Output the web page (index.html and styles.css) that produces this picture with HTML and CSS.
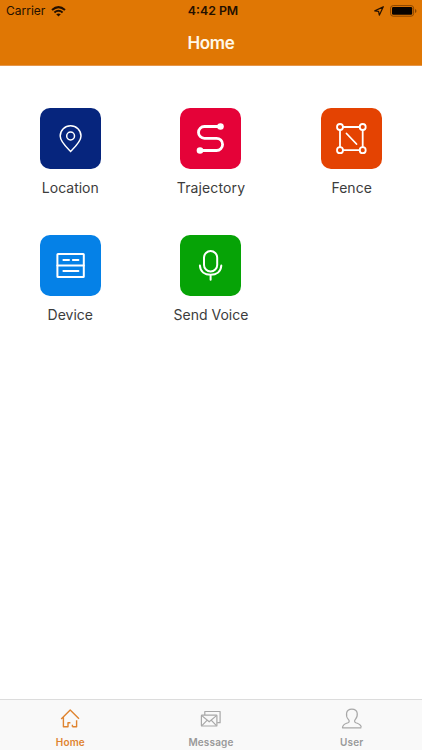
FILE: index.html
```html
<!DOCTYPE html>
<html lang="en">
<head>
<meta charset="utf-8">
<title>Home</title>
<link rel="stylesheet" href="styles.css">
</head>
<body>
<div class="app">
  <header class="header">
    <div class="status">
      <div class="status-left"><span class="carrier">Carrier</span>
        <svg width="15" height="11" viewBox="0 0 15 11" fill="none" stroke="#241000" stroke-width="2"><path d="M1 4Q7.5-1.7 14 4M3.4 6.5Q7.5 3 11.6 6.5"/><path d="M5.2 8.3Q7.5 6.5 9.8 8.3L7.5 10.6Z" fill="#241000" stroke="none"/></svg>
      </div>
      <div class="time">4:42 PM</div>
      <div class="status-right">
        <svg width="10" height="10" viewBox="0 0 10 10" fill="none" stroke="#241000" stroke-width="1.2" stroke-linejoin="round"><path d="M9.3 .7L.8 4.9L4.6 5.4L5.3 9.2Z"/></svg>
        <svg width="27" height="12" viewBox="0 0 27 12"><rect x=".6" y=".6" width="23" height="10.6" rx="2.6" fill="none" stroke="#884500"/><rect x="2" y="2" width="20.2" height="7.8" rx="1.3" fill="#080300"/><path d="M25 4Q26.5 4.6 26.5 6T25 8Z" fill="#884500"/></svg>
      </div>
    </div>
    <h1 class="title">Home</h1>
  </header>
  <main class="grid">
    <div class="item">
      <svg class="tile location" viewBox="0 0 61 61"><path d="M30.6 43.4C27 39.8 20.2 33.6 20.2 28a10.4 10.3 0 0 1 20.8 0C41 33.6 34.2 39.8 30.6 43.4Z"/><circle cx="30.6" cy="28" r="3.9"/></svg>
      <span class="label location-label">Location</span>
    </div>
    <div class="item">
      <svg class="tile trajectory" viewBox="0 0 61 61"><path d="M40.5 18.5H24.4a5.9 5.9 0 0 0 0 11.8H36.5a6.1 6.1 0 0 1 0 12.2H20"/><circle class="dot" cx="40.5" cy="18.5" r="3.3"/><circle class="dot" cx="20" cy="42.5" r="3.3"/></svg>
      <span class="label trajectory-label">Trajectory</span>
    </div>
    <div class="item">
      <svg class="tile fence" viewBox="0 0 61 61"><path d="M22 19H38.7M22 42.2H38.7M19 22V39.2M41.7 22V39.2M25.5 25.5L35.5 36"/><circle cx="19" cy="19" r="3"/><circle cx="41.7" cy="19" r="3"/><circle cx="19" cy="42.2" r="3"/><circle cx="41.7" cy="42.2" r="3"/></svg>
      <span class="label fence-label">Fence</span>
    </div>
    <div class="item">
      <svg class="tile device" viewBox="0 0 61 61"><rect x="17.4" y="18.9" width="26.4" height="23.2" rx=".6"/><path d="M17.4 30.4H43.8M23.4 25H29M32.9 25H38.4M23.4 36H38.4"/></svg>
      <span class="label device-label">Device</span>
    </div>
    <div class="item">
      <svg class="tile voice" viewBox="0 0 61 61"><rect x="24" y="16.1" width="13.2" height="20.4" rx="6.6"/><path d="M19.9 30.6C20.3 36.5 24.7 39.8 30.6 39.8S40.9 36.5 41.3 30.6M30.6 40V44.7"/></svg>
      <span class="label voice-label">Send Voice</span>
    </div>
  </main>
  <nav class="tabs">
    <div class="tab active">
      <svg viewBox="0 0 22 22"><path d="M4.4 9V18.8H9V14.8H11.4M13.4 18.8H17.6V12.2M13.4 18.8V16.8M2.2 11L11.2 2.1L20 10.8"/></svg>
      <span class="home-tab">Home</span>
    </div>
    <div class="tab">
      <svg viewBox="0 0 22 22"><path d="M4.8 7V3.5H20.1V14.7H17.2"/><rect x="1.4" y="7.2" width="15.5" height="10.8" rx=".6"/><path d="M1.8 7.6L9.2 13.8L16.5 7.6M1.9 17.6L7 12.3M16.4 17.6L11.4 12.3"/></svg>
      <span class="message-tab">Message</span>
    </div>
    <div class="tab">
      <svg viewBox="0 0 22 22"><path d="M20.3 19.8H1.5C1.5 16.3 4.3 15.7 7 14.7C8.7 14 8.4 12.5 7.3 11.4C5.6 9.7 5.3 7.4 5.6 5.2C6 2.4 8 1.1 10.9 1.1S15.8 2.4 16.2 5.2C16.5 7.5 16.1 9.7 14.4 11.4C13.3 12.5 13.2 14 14.8 14.7C17.4 15.7 19.9 16.2 20.3 19.3"/></svg>
      <span class="user-tab">User</span>
    </div>
  </nav>
</div>
</body>
</html>
```
FILE: styles.css
```css
* { box-sizing: border-box; }
body { margin: 0; background: #fff; font-family: Inter, sans-serif; }
.app { width: 422px; height: 750px; display: flex; flex-direction: column; }
.header { height: 66px; flex-shrink: 0; background: #e07704; border-bottom: 1px solid #e5964a; }
.status { height: 22px; padding: 0 5px 0 6px; display: grid; grid-template-columns: 1fr auto 1fr; align-items: center; color: #241000; font-size: 12px; line-height: 22px; }
.status-left, .status-right { display: flex; align-items: center; gap: 6px; }
.status-right { justify-content: flex-end; }
.carrier { letter-spacing: 0; }
.time { font-weight: 600; letter-spacing: 0; font-size: 12.3px; padding-left: 3px; }
.title { margin: 0; color: #fff9e9; text-align: center; font-size: 17px; font-weight: 600; line-height: 42px; letter-spacing: -.3px; }
.grid { flex: 1; display: grid; grid-template-columns: repeat(3, 1fr); grid-auto-rows: 126.6px; padding-top: 42.3px; }
.item { display: flex; flex-direction: column; align-items: center; }
.tile { width: 61px; height: 61px; border-radius: 10px; fill: none; stroke: #fff; stroke-width: 1.8; stroke-linecap: round; }
.location { background: #06257d; stroke-width: 1.5; }
.trajectory { background: #e50238; stroke-width: 2.8; }
.fence { background: #e44302; }
.device { background: #0581e7; stroke-width: 2; }
.voice { background: #06a306; stroke-width: 2; }
.dot { fill: #fff; stroke: none; }
.label { margin-top: 9px; font-size: 14px; line-height: 20px; color: #3c3c3c; white-space: nowrap; }
.trajectory-label { letter-spacing: .12px; }
.tabs { height: 51px; flex-shrink: 0; display: grid; grid-template-columns: repeat(3, 1fr); background: #f9f9f9; border-top: 1px solid #dcdcdc; }
.tab { display: flex; flex-direction: column; align-items: center; padding-top: 8px; font-size: 10px; line-height: 14px; font-weight: 600; color: #999; }
.tab svg { width: 22px; height: 22px; fill: none; stroke: #a8a8a8; stroke-width: 1.2; stroke-linejoin: round; }
.tab span { margin-top: 5px; letter-spacing: .15px; }
.tab.active { color: #df8430; }
.tab.active svg { stroke: #df8430; stroke-width: 1.4; }
```
